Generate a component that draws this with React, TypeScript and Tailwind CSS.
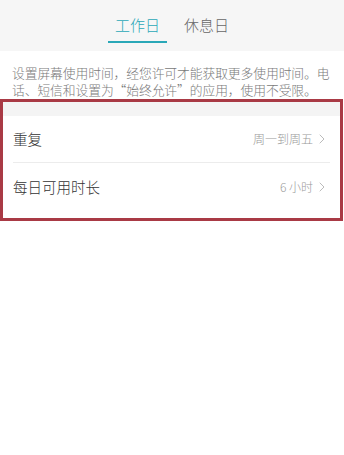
import { ChevronRight } from 'lucide-react';

const rows = [
  { label: '重复', value: '周一到周五' },
  { label: '每日可用时长', value: '6 小时' },
];

export default function App() {
  return (
    <div
      className="w-[344px] h-[455px] bg-white overflow-hidden"
      style={{ fontFamily: '"Noto Sans CJK SC", "Noto Sans", sans-serif' }}
    >
      {/* Tabs */}
      <div className="h-[51px] bg-[#f6f6f6] flex justify-center items-end gap-[16px] pr-[8px]">
        <div className="flex flex-col items-center">
          <span className="text-[15px] leading-[20px] font-light text-[#2aa8b8] px-[8px]">工作日</span>
          <div className="mt-[6px] h-[2px] w-[59px] bg-[#2aa8b8] mb-[8px]" />
        </div>
        <div className="flex flex-col items-center">
          <span className="text-[15px] leading-[20px] font-light text-[#666]">休息日</span>
          <div className="mt-[6px] h-[2px] mb-[8px]" />
        </div>
      </div>

      {/* Description */}
      <p className="px-[12px] pt-[13px] text-[12.8px] leading-[17px] font-light text-[#7a7a7a] tracking-[-0.1px]">
        设置屏幕使用时间，经您许可才能获取更多使用时间。电话、短信和设置为“始终允许”的应用，使用不受限。
      </p>

      {/* Settings list (highlighted) */}
      <div className="mt-[1px] mr-[1px] border-[3px] border-[#a93a45] pb-[8px]">
        <div className="h-[14px] bg-[#f4f4f4]" />
        {rows.map((row, i) => (
          <div key={row.label} className="px-[10px]">
            <div
              className={
                'h-[47px] flex items-center justify-between ' +
                (i === 0 ? 'border-b border-[#ececec]' : '')
              }
            >
              <span className="text-[14.5px] font-light text-[#333]">{row.label}</span>
              <span className="flex items-center text-[12px] font-light text-[#999]">
                {row.value}
                <ChevronRight className="w-[16px] h-[16px] ml-[1px] text-[#aaa]" strokeWidth={1.2} />
              </span>
            </div>
          </div>
        ))}
      </div>
    </div>
  );
}
